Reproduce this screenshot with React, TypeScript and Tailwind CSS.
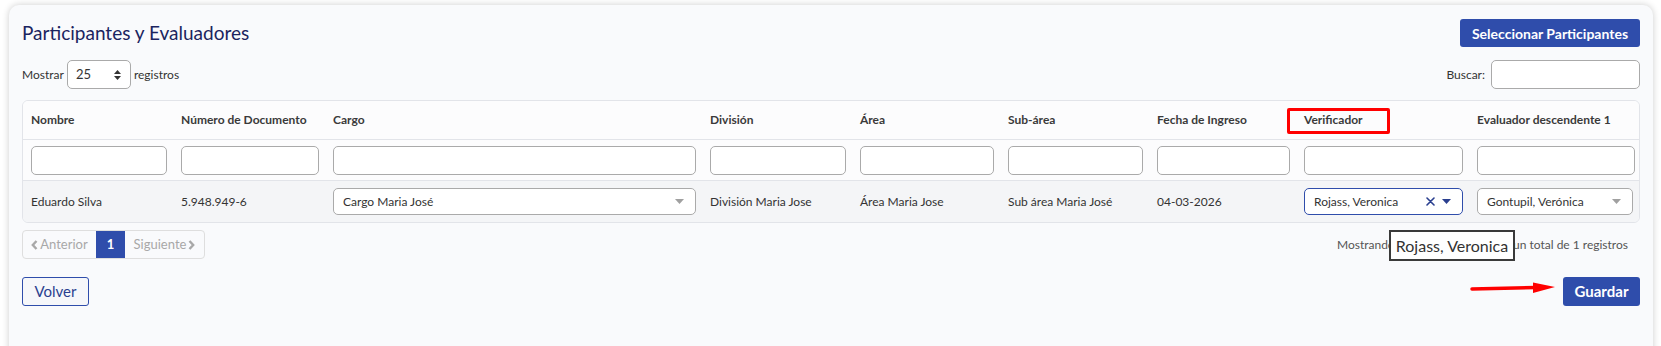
import React from "react";

const font = { fontFamily: "Lato, 'Noto Sans', sans-serif" };

function Caret({ color = "#a0a0a0" }: { color?: string }) {
  return (
    <svg width="9" height="5" viewBox="0 0 9 5">
      <polygon points="0,0 9,0 4.5,5" fill={color} />
    </svg>
  );
}

function Select({
  text,
  active,
}: {
  text: string;
  active?: boolean;
}) {
  return (
    <div
      className={`flex h-[27px] items-center rounded-[5px] border bg-white pl-[9px] pr-[11px] text-[12px] text-[#333] ${
        active ? "border-[#2f4dab]" : "border-[#aaaaaa]"
      }`}
    >
      <span className="flex-1 truncate">{text}</span>
      {active ? (
        <div className="flex items-center gap-[7px]">
          <svg width="9" height="9" viewBox="0 0 9 9">
            <path d="M1 1 L8 8 M8 1 L1 8" stroke="#2a3f8f" strokeWidth="1.6" strokeLinecap="round" />
          </svg>
          <Caret color="#2a3f8f" />
        </div>
      ) : (
        <Caret />
      )}
    </div>
  );
}

const gridCols =
  "grid grid-cols-[150px_152px_377px_150px_148px_149px_147px_173px_172px]";

const headers = [
  "Nombre",
  "Número de Documento",
  "Cargo",
  "División",
  "Área",
  "Sub-área",
  "Fecha de Ingreso",
  "Verificador",
  "Evaluador descendente 1",
];

export default function App() {
  return (
    <div
      className="relative h-[346px] w-[1661px] overflow-hidden bg-white pl-[9px] pr-[8px] pt-[5px]"
      style={font}
    >
      <div className="h-[360px] rounded-[10px] bg-[#f9fafc] px-[13px] pt-[14px] shadow-[0_0_7px_rgba(0,0,0,0.2)]">
        {/* Title row */}
        <div className="flex h-[28px] items-center justify-between">
          <h1 className="text-[19px] font-normal text-[#1b2460]">
            Participantes y Evaluadores
          </h1>
          <button className="h-[28px] w-[180px] rounded-[3px] bg-[#2f4dab] text-[14px] font-bold text-white">
            Seleccionar Participantes
          </button>
        </div>

        {/* Mostrar / Buscar */}
        <div className="mt-[13px] flex h-[29px] items-center justify-between text-[12px] text-[#333]">
          <div className="flex items-center">
            <span>Mostrar</span>
            <div className="mx-[3px] flex h-[29px] w-[64px] items-center justify-between rounded-[5px] border border-[#aaaaaa] bg-white pl-[8px] pr-[9px]">
              <span className="text-[13px]">25</span>
              <svg width="7" height="10" viewBox="0 0 7 10">
                <polygon points="0,4 7,4 3.5,0" fill="#333" />
                <polygon points="0,6 7,6 3.5,10" fill="#333" />
              </svg>
            </div>
            <span>registros</span>
          </div>
          <div className="flex items-center">
            <span className="mr-[6px]">Buscar:</span>
            <div className="h-[29px] w-[149px] rounded-[5px] border border-[#aaaaaa] bg-white" />
          </div>
        </div>

        {/* Table */}
        <div className="mt-[11px] overflow-hidden rounded-[6px] border border-[#e2e4e9]">
          <div className={`${gridCols} h-[39px] items-center border-b border-[#e2e4e9] bg-[#fcfcfd]`}>
            {headers.map((h) => (
              <div key={h} className="relative pl-[8px] text-[12px] font-bold leading-[18px] text-[#3a3a3a]">
                {h}
                {h === "Verificador" && (
                  <div className="absolute left-[-9px] top-[-3px] h-[26px] w-[103px] rounded-[2px] border-[3px] border-[#ff0000]" />
                )}
              </div>
            ))}
          </div>
          <div className={`${gridCols} h-[41px] items-center border-b border-[#e2e4e9] bg-[#fcfcfd]`}>
            {headers.map((h) => (
              <div key={h} className="pl-[8px] pr-[6px]">
                <div className="h-[29px] rounded-[5px] border border-[#aaaaaa] bg-white" />
              </div>
            ))}
          </div>
          <div className={`${gridCols} h-[41px] items-center bg-[#f4f5f7] text-[12px] text-[#333]`}>
            <div className="pl-[8px]">Eduardo Silva</div>
            <div className="pl-[8px]">5.948.949-6</div>
            <div className="pl-[8px] pr-[6px]">
              <Select text="Cargo Maria José" />
            </div>
            <div className="pl-[8px]">División Maria Jose</div>
            <div className="pl-[8px]">Área Maria Jose</div>
            <div className="pl-[8px]">Sub área Maria José</div>
            <div className="pl-[8px]">04-03-2026</div>
            <div className="pl-[8px] pr-[6px]">
              <Select text="Rojass, Veronica" active />
            </div>
            <div className="pl-[8px] pr-[8px]">
              <Select text="Gontupil, Verónica" />
            </div>
          </div>
        </div>

        {/* Pagination row */}
        <div className="mt-[7px] flex items-center justify-between">
          <div className="flex h-[29px] items-stretch overflow-hidden rounded-[4px] border border-[#dedede] text-[13px]">
            <div className="flex w-[73px] items-center justify-center gap-[2px] text-[#a8a8a8]">
              <svg width="7" height="10" viewBox="0 0 7 10">
                <path d="M5.5 1 L1.8 5 L5.5 9" stroke="#a8a8a8" strokeWidth="2.4" fill="none" />
              </svg>
              <span>Anterior</span>
            </div>
            <div className="flex w-[29px] items-center justify-center bg-[#2f4dab] font-bold text-white">1</div>
            <div className="flex w-[79px] items-center justify-center gap-[2px] text-[#a8a8a8]">
              <span>Siguiente</span>
              <svg width="7" height="10" viewBox="0 0 7 10">
                <path d="M1.5 1 L5.2 5 L1.5 9" stroke="#a8a8a8" strokeWidth="2.4" fill="none" />
              </svg>
            </div>
          </div>
          <div className="pr-[12px] text-[12px] text-[#555]">
            Mostrando registros del 1 al 1 de un total de 1 registros
          </div>
        </div>

        {/* Buttons row */}
        <div className="mt-[18px] flex items-center justify-between">
          <button className="h-[29px] w-[67px] rounded-[3px] border border-[#2f4dab] bg-[#f6f7fa] text-[15px] text-[#2a3f8f]">
            Volver
          </button>
          <button className="h-[29px] w-[77px] rounded-[3px] bg-[#2f4dab] text-[15px] font-bold text-white">
            Guardar
          </button>
        </div>
      </div>

      {/* Tooltip overlay */}
      <div className="absolute left-[1389px] top-[230px] flex h-[31px] w-[126px] items-center justify-center border-2 border-[#3a3a3a] bg-white text-[16px] text-[#333]">
        Rojass, Veronica
      </div>

      {/* Red arrow annotation */}
      <svg
        className="absolute left-[1470px] top-[281px]"
        width="86"
        height="14"
        viewBox="0 0 86 14"
      >
        <line x1="2" y1="8" x2="66" y2="6.5" stroke="#ff0000" strokeWidth="3.5" strokeLinecap="round" />
        <polygon points="63,1.5 85,6 63,12" fill="#ff0000" />
      </svg>
    </div>
  );
}
